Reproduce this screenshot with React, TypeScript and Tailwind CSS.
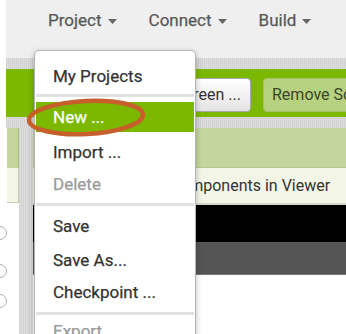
import React from "react";

const navItems = ["Project", "Connect", "Build"];

const menuText = "text-[17px] font-['Roboto',sans-serif] [-webkit-text-stroke:0.25px_currentColor]";

const Caret = () => (
  <svg width="9" height="5" viewBox="0 0 9 5" className="ml-[6px] mt-[2px]">
    <path d="M0 0 L9 0 L4.5 5 Z" fill="#666" />
  </svg>
);

const texture =
  "bg-[repeating-linear-gradient(90deg,#d2d2d2_0px,#d2d2d2_1px,#dddddd_1px,#dddddd_2px)]";

const App = () => {
  return (
    <div className="relative h-[334px] w-[346px] overflow-hidden bg-white font-['Roboto',sans-serif]">
      {/* top nav */}
      <div className="ml-[6px] flex h-[58px] items-start gap-[32px] bg-[#efefef] pl-[42px] pt-[10px]">
        {navItems.map((item) => (
          <div
            key={item}
            className="flex items-center text-[17px] leading-[20px] text-[#585858] [-webkit-text-stroke:0.25px_currentColor]"
          >
            <span>{item}</span>
            <Caret />
          </div>
        ))}
      </div>

      <div className={`ml-[6px] h-[11px] ${texture}`} />

      {/* green toolbar */}
      <div className="ml-[6px] flex h-[48px] items-start gap-[12px] bg-[#7cb800] pl-[123px] pt-[9px]">
        <button className="h-[34px] w-[122px] shrink-0 rounded-[4px] border border-[#a9a9a9] bg-gradient-to-b from-white to-[#e4e4e4] pr-[9px] text-right text-[16px] text-[#333]">
          Add Screen ...
        </button>
        <button className="h-[34px] w-[150px] shrink-0 rounded-[4px] border border-[#a2c164] bg-[#b6d17f] pl-[8px] text-left text-[16px] text-[#3c4628]">
          Remove Screen
        </button>
      </div>

      <div className={`ml-[6px] h-[11px] ${texture}`} />

      {/* lower panels */}
      <div className="flex h-[206px]">
        <div className="flex w-[19px] flex-col">
          <div className="ml-[7px] h-[40px] border-r border-[#a9bd7f] bg-[#c3d79d]" />
          <div className="ml-[7px] h-[35px] border-b border-r border-[#c9ccbc] bg-[#f3f5e6]" />
          <div className="flex flex-col">
            <div className="ml-[-8px] mt-[23px] h-[14px] w-[15px] rounded-full border border-[#b0b0b0]" />
            <div className="ml-[-8px] mt-[24px] h-[14px] w-[15px] rounded-full border border-[#b0b0b0]" />
            <div className="ml-[-8px] mt-[16px] h-[14px] w-[15px] rounded-full border border-[#b0b0b0]" />
          </div>
        </div>
        <div className={`w-[14px] ${texture}`} />
        <div className="flex flex-1 flex-col">
          <div className="h-[40px] border-b border-[#b5c98d] bg-[#c3d79d]" />
          <div className="flex h-[35px] items-center bg-[#f3f5e6] pl-[31px] text-[16px] text-[#333]">
            Display hidden components in Viewer
          </div>
          <div className="h-[2px] bg-[#d4d6cc]" />
          <div className="h-[37px] bg-black" />
          <div className="h-[33px] border-b border-[#777] bg-[#555555]" />
          <div className="flex-1 bg-white" />
        </div>
      </div>

      {/* dropdown menu */}
      <div className="absolute left-[34px] top-[50px] h-[300px] w-[162px] rounded-t-[5px] border border-[#b4b4b4] bg-white px-[1px] pt-[9px] shadow-[0_2px_6px_rgba(0,0,0,0.25)]">
        <div className={`h-[32px] pl-[17px] leading-[32px] text-[#333] ${menuText}`}>My Projects</div>
        <div className="mb-[5px] mt-[2px] h-[3px] bg-[#e1e1e1]" />
        <div className={`h-[30px] bg-[#7cb800] pl-[17px] leading-[30px] text-white ${menuText}`}>New ...</div>
        <div className={`mt-[4px] h-[32px] pl-[17px] leading-[32px] text-[#333] ${menuText}`}>Import ...</div>
        <div className={`h-[32px] pl-[17px] leading-[32px] text-[#9a9a9a] ${menuText}`}>Delete</div>
        <div className="mb-[4px] mt-[3px] h-[3px] bg-[#e1e1e1]" />
        <div className={`h-[34px] pl-[17px] leading-[32px] text-[#333] ${menuText}`}>Save</div>
        <div className={`h-[32px] pl-[17px] leading-[32px] text-[#333] ${menuText}`}>Save As...</div>
        <div className={`h-[32px] pl-[17px] leading-[32px] text-[#333] ${menuText}`}>Checkpoint ...</div>
        <div className="mt-[4px] h-[3px] bg-[#e1e1e1]" />
        <div className={`h-[32px] pl-[17px] leading-[32px] text-[#9a9a9a] ${menuText}`}>Export ...</div>
      </div>

      {/* highlight ring */}
      <svg
        className="pointer-events-none absolute left-[24px] top-[95px]"
        width="126"
        height="46"
        viewBox="0 0 126 46"
      >
        <ellipse
          cx="62"
          cy="22.5"
          rx="57"
          ry="16.5"
          transform="rotate(-3 62 22.5)"
          fill="none"
          stroke="#c65f2c"
          strokeWidth="4.5"
        />
      </svg>
    </div>
  );
};

export default App;
